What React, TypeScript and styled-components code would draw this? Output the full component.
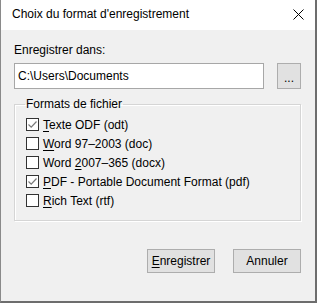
import React from "react";
import styled, { createGlobalStyle } from "styled-components";

const Global = createGlobalStyle`
  html, body { margin: 0; padding: 0; background: #ffffff; }
  body { font-family: "Liberation Sans", Arial, sans-serif; font-size: 12px; color: #000; }
  * { box-sizing: border-box; }
`;

const Window = styled.div`
  width: 317px;
  height: 303px;
  display: flex;
  flex-direction: column;
  border-left: 1px solid #8a8a8a;
  border-right: 2px solid #6d6d6d;
  border-bottom: 2px solid #6d6d6d;
  background: #f0f0f0;
`;

const TitleBar = styled.div`
  height: 30px;
  flex: none;
  background: #ffffff;
  display: flex;
  align-items: center;
  justify-content: space-between;
  padding: 0 10px 0 11px;
`;

const Title = styled.span`
  font-size: 12px;
  line-height: 15px;
  margin-top: -2px;
`;

const CloseButton = styled.div`
  width: 13px;
  height: 13px;
  display: flex;
  align-items: center;
  justify-content: center;
  margin-top: -2px;
`;

const Body = styled.div`
  flex: 1;
  display: flex;
  flex-direction: column;
  padding: 13px 14px 0 13px;
`;

const Label = styled.div`
  line-height: 15px;
  height: 15px;
`;

const PathRow = styled.div`
  display: flex;
  gap: 13px;
  margin-top: 5px;
`;

const PathInput = styled.div`
  flex: 1;
  height: 26px;
  background: #ffffff;
  border: 1px solid #a7a7a7;
  display: flex;
  align-items: center;
  padding-left: 3px;
`;

const Button = styled.div<{ $w: number; $h: number }>`
  width: ${(p) => p.$w}px;
  height: ${(p) => p.$h}px;
  background: #e1e1e1;
  border: 1px solid #adadad;
  display: flex;
  align-items: center;
  justify-content: center;
`;

const Dots = styled.span`
  font-size: 12px;
  margin-top: 4px;
`;

const Group = styled.fieldset`
  margin: 8px 0 0 0;
  padding: 3px 11px 10px 11px;
  border: 1px solid #d5d5d5;
  box-shadow: inset 1px 1px 0 #ffffff, 1px 1px 0 #ffffff;
  min-width: 0;
`;

const Legend = styled.legend`
  padding: 0 1px;
  margin-left: -1px;
  line-height: 15px;
  background: transparent;
`;

const Option = styled.div`
  display: flex;
  align-items: center;
  gap: 4px;
  height: 19px;
`;

const Box = styled.div`
  width: 13px;
  height: 13px;
  border: 1px solid #333333;
  background: #ffffff;
  display: flex;
  align-items: center;
  justify-content: center;
  flex: none;
`;

const U = styled.span`
  text-decoration: underline;
  text-underline-offset: 2px;
`;

const Footer = styled.div`
  display: flex;
  justify-content: flex-end;
  gap: 18px;
  margin-top: 28px;
`;

const options: { pre: string; key: string; post: string; checked: boolean }[] = [
  { pre: "", key: "T", post: "exte ODF (odt)", checked: true },
  { pre: "", key: "W", post: "ord 97–2003 (doc)", checked: false },
  { pre: "Word ", key: "2", post: "007–365 (docx)", checked: false },
  { pre: "", key: "P", post: "DF - Portable Document Format (pdf)", checked: true },
  { pre: "", key: "R", post: "ich Text (rtf)", checked: false },
];

export default function App() {
  return (
    <>
      <Global />
      <Window>
        <TitleBar>
          <Title>Choix du format d'enregistrement</Title>
          <CloseButton>
            <svg width="11" height="11" viewBox="0 0 11 11">
              <path d="M0.5 0.5 L10.5 10.5 M10.5 0.5 L0.5 10.5" stroke="#000" strokeWidth="1" fill="none" />
            </svg>
          </CloseButton>
        </TitleBar>
        <Body>
          <Label>Enregistrer dans:</Label>
          <PathRow>
            <PathInput>C:\Users\Documents</PathInput>
            <Button $w={24} $h={26}>
              <Dots>...</Dots>
            </Button>
          </PathRow>
          <Group>
            <Legend>Formats de fichier</Legend>
            {options.map((o, i) => (
              <Option key={i}>
                <Box>
                  {o.checked && (
                    <svg width="11" height="11" viewBox="0 0 11 11">
                      <path d="M1.5 5.5 L4.2 8.2 L9.5 2.5" stroke="#7a7a7a" strokeWidth="1.2" fill="none" />
                    </svg>
                  )}
                </Box>
                <span>
                  {o.pre}
                  <U>{o.key}</U>
                  {o.post}
                </span>
              </Option>
            ))}
          </Group>
          <Footer>
            <Button $w={68} $h={24}>
              <span>
                <U>E</U>nregistrer
              </span>
            </Button>
            <Button $w={68} $h={24}>Annuler</Button>
          </Footer>
        </Body>
      </Window>
    </>
  );
}
